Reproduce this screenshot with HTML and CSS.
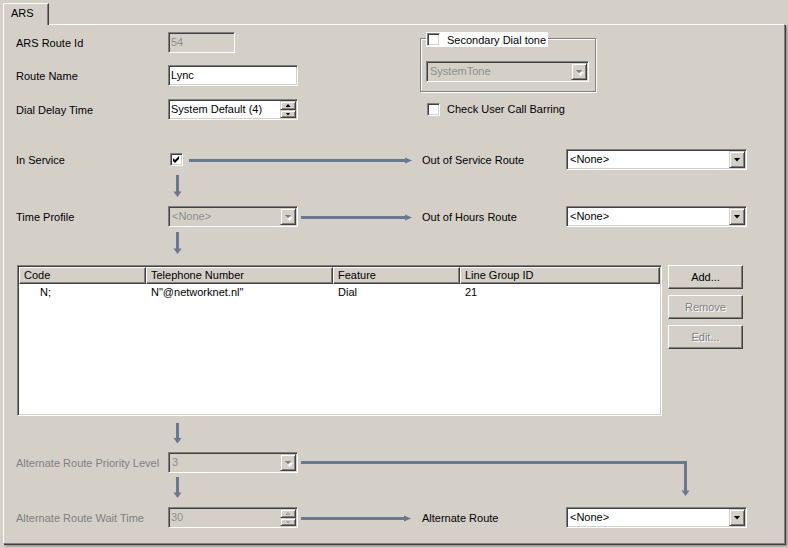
FILE: index.html
```html
<!doctype html>
<html lang="en">
  <head>
    <meta charset="UTF-8" />
    <title>ARS</title>
    <link rel="stylesheet" href="styles.css">
  </head>
  <body>
    <div class="tabstrip">
      <div class="tab">ARS</div>
    </div>

    <div class="panel">
      <div class="top">
        <div class="fields">
          <div class="field-row">
            <span class="label">ARS Route Id</span>
            <span class="textbox disabled short">54</span>
          </div>
          <div class="field-row">
            <span class="label">Route Name</span>
            <span class="textbox wide">Lync</span>
          </div>
          <div class="field-row delay">
            <span class="label">Dial Delay Time</span>
            <span class="spin wide">
              <span class="spin-value">System Default (4)</span>
              <span class="spin-btns"><span class="spin-up"></span><span class="spin-down"></span></span>
            </span>
          </div>
        </div>

        <div class="side">
          <div class="group">
            <div class="group-legend">
              <span class="check"></span>
              <span>Secondary Dial tone</span>
            </div>
            <span class="combo disabled tone">
              <span class="combo-value">SystemTone</span>
              <span class="combo-btn"></span>
            </span>
          </div>
          <div class="check-row">
            <span class="check"></span>
            <span>Check User Call Barring</span>
          </div>
        </div>
      </div>

      <div class="route-row in-service">
        <span class="label">In Service</span>
        <span class="cell">
          <span class="check checked">
            <svg width="9" height="9" viewBox="0 0 9 9"><path d="M1 3 3 5 7 1v3L3 8 1 6z" fill="#000"/></svg>
          </span>
        </span>
        <span></span>
        <span class="label">Out of Service Route</span>
        <span class="combo route">
          <span class="combo-value">&lt;None&gt;</span>
          <span class="combo-btn"></span>
        </span>
      </div>

      <div class="route-row time-profile">
        <span class="label">Time Profile</span>
        <span class="combo disabled wide">
          <span class="combo-value">&lt;None&gt;</span>
          <span class="combo-btn"></span>
        </span>
        <span></span>
        <span class="label">Out of Hours Route</span>
        <span class="combo route">
          <span class="combo-value">&lt;None&gt;</span>
          <span class="combo-btn"></span>
        </span>
      </div>

      <div class="rules">
        <div class="list">
          <div class="list-head">
            <span>Code</span>
            <span>Telephone Number</span>
            <span>Feature</span>
            <span>Line Group ID</span>
          </div>
          <div class="list-row">
            <span class="code">N;</span>
            <span>N"@networknet.nl"</span>
            <span>Dial</span>
            <span>21</span>
          </div>
        </div>
        <div class="actions">
          <button class="btn">Add...</button>
          <button class="btn" disabled>Remove</button>
          <button class="btn" disabled>Edit...</button>
        </div>
      </div>

      <div class="route-row alt-priority">
        <span class="label muted">Alternate Route Priority Level</span>
        <span class="combo disabled wide">
          <span class="combo-value">3</span>
          <span class="combo-btn"></span>
        </span>
      </div>

      <div class="route-row alt-wait">
        <span class="label muted">Alternate Route Wait Time</span>
        <span class="spin disabled wide">
          <span class="spin-value">30</span>
          <span class="spin-btns"><span class="spin-up"></span><span class="spin-down"></span></span>
        </span>
        <span></span>
        <span class="label">Alternate Route</span>
        <span class="combo route">
          <span class="combo-value">&lt;None&gt;</span>
          <span class="combo-btn"></span>
        </span>
      </div>
    </div>

    <!-- flow connectors drawn over the form -->
    <svg class="flow" width="788" height="548" viewBox="0 0 788 548">
      <g fill="none" stroke="#687890" stroke-width="3">
        <path d="M189 160.5H406" />
        <path d="M301 217.5H406" />
        <path d="M301 518.5H405" />
        <path d="M177.5 175V192" />
        <path d="M177.5 232V249" />
        <path d="M177.5 423V439" />
        <path d="M177.5 477V493" />
        <path d="M301 462.5H685.5V491" />
      </g>
      <g fill="#687890">
        <path d="M405 157.5 412 160.5 405 163.5z" />
        <path d="M405 214.5 412 217.5 405 220.5z" />
        <path d="M404 515.5 411 518.5 404 521.5z" />
        <path d="M173.5 191.5H181.5L177.5 197z" />
        <path d="M173.5 248.5H181.5L177.5 254z" />
        <path d="M173.5 438H181.5L177.5 443.5z" />
        <path d="M173.5 492.5H181.5L177.5 498z" />
        <path d="M681.5 490.5H689.5L685.5 496z" />
      </g>
    </svg>
  </body>
</html>
```

FILE: styles.css
```css
body {
  margin: 0;
  position: relative;
  width: 788px;
  height: 548px;
  overflow: hidden;
  background: #d4d0c8;
  font: 11px "Liberation Sans", Arial, sans-serif;
  color: #000;
}

.tabstrip {
  display: flex;
  height: 24px;
  padding: 3px 0 0 3px;
  box-sizing: border-box;
}

.tab {
  position: relative;
  z-index: 1;
  width: 46px;
  height: 22px;
  box-sizing: border-box;
  padding: 2px 0 0 7px;
  line-height: 14px;
  background: #d4d0c8;
  border-top: 1px solid #fff;
  border-left: 1px solid #fff;
  border-right: 1px solid #404040;
  border-top-left-radius: 2px;
  box-shadow: inset -1px 0 #808080;
}

.panel {
  margin-left: 3px;
  width: 782px;
  height: 520px;
  box-sizing: border-box;
  padding: 7px 0 0 12px;
  border-top: 1px solid #fff;
  border-left: 1px solid #fff;
  border-right: 1px solid #808080;
  border-bottom: 1px solid #808080;
  box-shadow: 1px 1px 0 #404040, 2px 2px 2px rgba(0, 0, 0, 0.4);
}

.top {
  display: flex;
  height: 88px;
}

.fields {
  width: 404px;
  display: flex;
  flex-direction: column;
  gap: 12px;
}

.field-row {
  display: flex;
  align-items: center;
  height: 21px;
}

.field-row.delay {
  margin-top: 1px;
}

.label {
  width: 152px;
  white-space: nowrap;
}

.label.muted {
  color: #808080;
}

/* sunken 3d edit look */
.textbox,
.combo,
.spin,
.check,
.list {
  box-sizing: border-box;
  border: 1px solid;
  border-color: #808080 #fff #fff #808080;
  box-shadow: inset 1px 1px #404040, inset -1px -1px #d4d0c8;
  background: #fff;
}

.textbox {
  height: 21px;
  padding: 0 2px;
  line-height: 19px;
}

.short { width: 67px; }
.wide { width: 130px; }
.route { width: 181px; }
.tone { width: 163px; }

.disabled {
  background: #d4d0c8;
  color: #8e8e8e;
}

.combo,
.spin {
  display: flex;
  height: 21px;
  padding: 1px;
}

.combo-value,
.spin-value {
  flex: 1;
  padding-left: 2px;
  line-height: 17px;
  white-space: nowrap;
}

.spin-value {
  padding-left: 1px;
}

.combo-btn,
.spin-up,
.spin-down {
  position: relative;
  display: flex;
  align-items: center;
  justify-content: center;
  box-sizing: border-box;
  background: #d4d0c8;
  border: 1px solid;
  border-color: #d4d0c8 #404040 #404040 #d4d0c8;
  box-shadow: inset 1px 1px #fff, inset -1px -1px #808080;
}

.combo-btn {
  width: 16px;
  height: 17px;
}

.combo-btn::after {
  content: "";
  width: 7px;
  height: 4px;
  background: #000;
  clip-path: polygon(0 0, 100% 0, 50% 100%);
}

.disabled .combo-btn::after {
  background: #808080;
}

.disabled .combo-btn::before {
  content: "";
  position: absolute;
  left: 5px;
  top: 8px;
  width: 7px;
  height: 4px;
  background: #fff;
  clip-path: polygon(0 0, 100% 0, 50% 100%);
}

.spin-btns {
  display: flex;
  flex-direction: column;
  width: 16px;
}

.spin-up { height: 9px; }
.spin-down { height: 8px; }

.spin-up::after,
.spin-down::after {
  content: "";
  width: 5px;
  height: 3px;
  background: #000;
}

.spin-up::after { clip-path: polygon(50% 0, 100% 100%, 0 100%); }
.spin-down::after { clip-path: polygon(0 0, 100% 0, 50% 100%); }

.disabled .spin-up::after,
.disabled .spin-down::after {
  background: #a0a0a0;
}

.check {
  display: inline-flex;
  align-items: center;
  justify-content: center;
  width: 13px;
  height: 13px;
  flex: none;
}

.side {
  width: 176px;
}

.group {
  position: relative;
  margin-top: 6px;
  width: 176px;
  height: 54px;
  box-sizing: border-box;
  padding: 22px 5px 0;
  border: 1px solid #808080;
  box-shadow: 1px 1px 0 #fff, inset 1px 1px 0 #fff;
}

.group-legend {
  position: absolute;
  top: -7px;
  left: 5px;
  display: flex;
  align-items: center;
  gap: 7px;
  width: 122px;
  height: 15px;
  box-sizing: border-box;
  padding-left: 1px;
  background: #fff;
}

.check-row {
  display: flex;
  align-items: center;
  gap: 7px;
  height: 14px;
  margin-top: 10px;
  padding-left: 7px;
}

.route-row {
  display: grid;
  grid-template-columns: 152px 130px 124px 144px 181px;
  align-items: center;
  height: 21px;
}

.route-row .label {
  width: auto;
}

.in-service { margin-top: 29px; }
.time-profile { margin-top: 36px; }
.alt-priority { margin-top: 36px; }
.alt-wait { margin-top: 34px; }

.in-service .check {
  margin-left: 2px;
}

.rules {
  display: flex;
  margin-top: 38px;
  margin-left: 1px;
}

.list {
  width: 645px;
  height: 151px;
  padding: 1px;
}

.list-head,
.list-row {
  display: grid;
  grid-template-columns: 127px 187px 127px 1fr;
}

.list-head span {
  box-sizing: border-box;
  height: 17px;
  padding-left: 4px;
  line-height: 15px;
  background: #d4d0c8;
  border: 1px solid;
  border-color: #fff #404040 #404040 #fff;
  box-shadow: inset -1px -1px #808080;
  white-space: nowrap;
}

.list-row {
  height: 17px;
  line-height: 17px;
}

.list-row span {
  padding-left: 5px;
  white-space: nowrap;
}

.list-row .code {
  padding-left: 21px;
}

.actions {
  display: flex;
  flex-direction: column;
  gap: 6px;
  margin-left: 6px;
}

.btn {
  width: 75px;
  height: 24px;
  padding: 0;
  font: inherit;
  color: #000;
  background: #d4d0c8;
  border: 1px solid;
  border-color: #fff #404040 #404040 #fff;
  box-shadow: inset -1px -1px #808080;
}

.btn:disabled {
  color: #808080;
  text-shadow: 1px 1px 0 #fff;
}

.flow {
  position: absolute;
  left: 0;
  top: 0;
  pointer-events: none;
}
```
